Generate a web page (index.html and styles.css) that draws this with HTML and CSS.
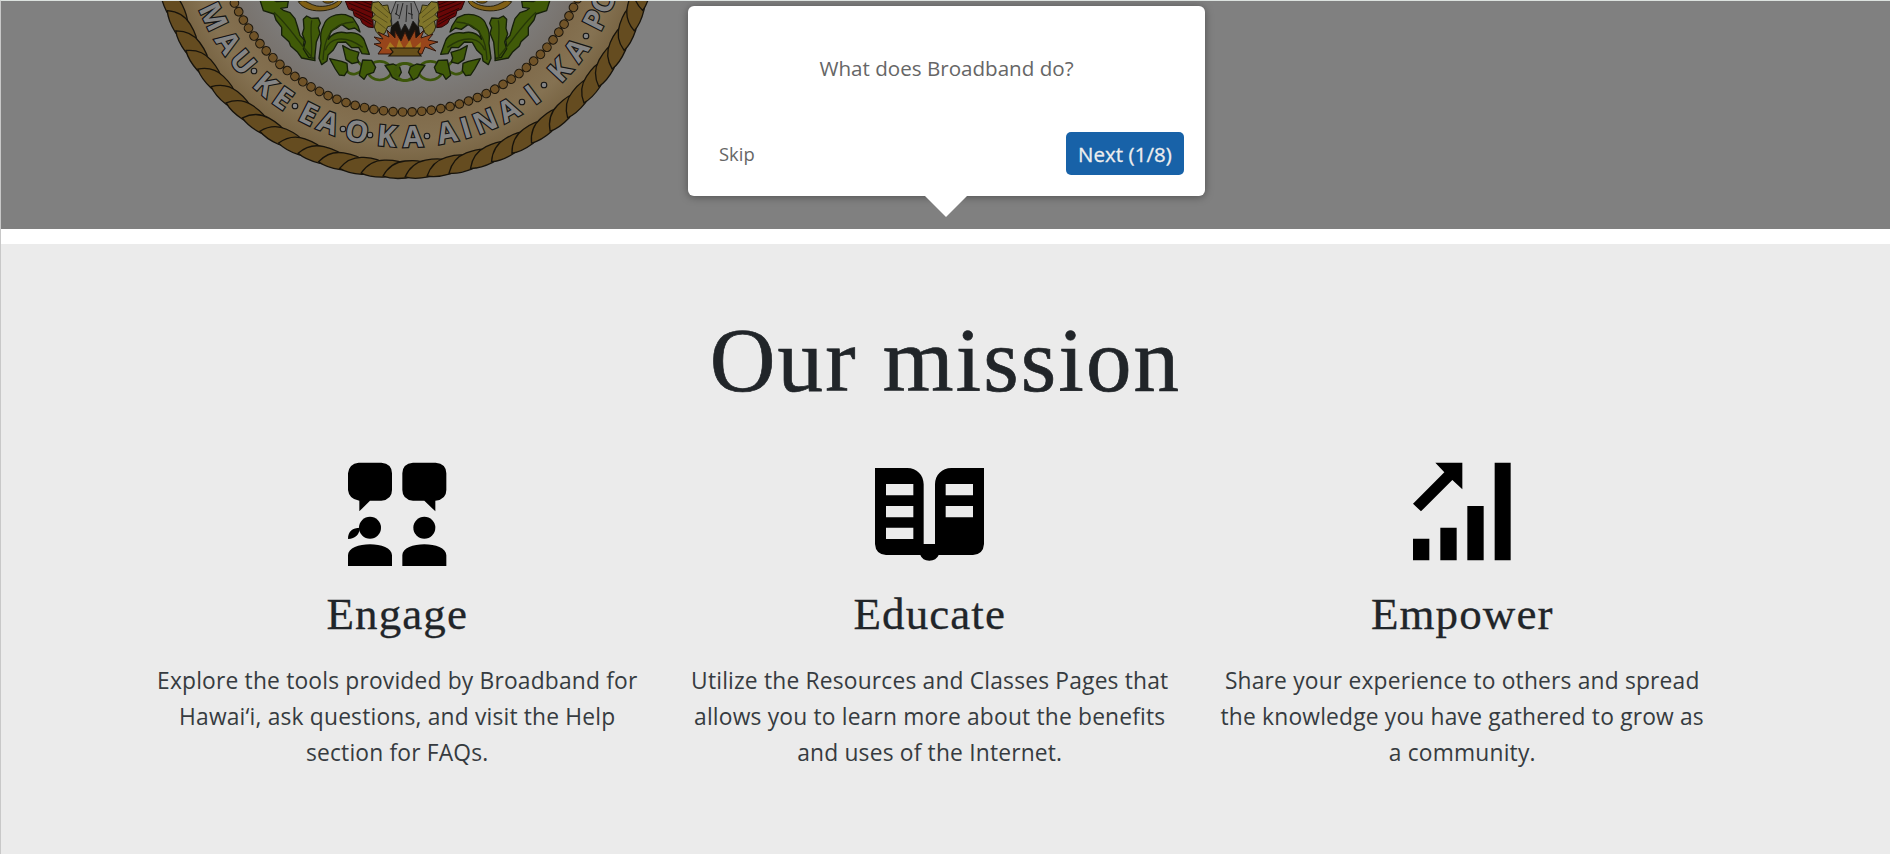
FILE: index.html
```html
<!DOCTYPE html>
<html lang="en">
<head>
<meta charset="utf-8">
<title>Broadband</title>
<link rel="stylesheet" href="styles.css">
</head>
<body>
<header class="hero">
  <svg class="seal" width="520" height="228" viewBox="145 1 520 228" aria-hidden="true">
    <defs>
      <radialGradient id="disc" gradientUnits="userSpaceOnUse" cx="405" cy="-76" r="190"><stop offset=".75" stop-color="#808080"/><stop offset="1" stop-color="#77716b"/></radialGradient>
      <radialGradient id="band" gradientUnits="userSpaceOnUse" cx="405" cy="-76" r="240"><stop offset=".78" stop-color="#806b4b"/><stop offset=".9" stop-color="#857252"/><stop offset="1" stop-color="#786443"/></radialGradient>
      <path id="s" d="M383 176C388 167 395 162 405 161C414 160 423 161 428 164C423 171 416 177 406 178C397 179 388 178 383 176Z"/>
      <g id="half">
        <path class="gold" d="M145 5C160 28 190 35 222 32C250 28 270 20 276 2L265 2C250 15 225 22 200 18C180 14 170 2 158 2Z"/>
        <path class="gold" d="M218 2C220 12 246 12 252 2Z" fill="#808080"/>
        <path class="leaf" d="M30 0L40 32L72 42L78 60L95 82L95 105L117 125L122 138L143 157L155 174L195 182L193 165L175 155L160 138L163 120L150 106L142 78L135 56L120 38L100 31L92 25L112 22L115 3L80 5L70 0Z"/>
        <path class="leaf" d="M160 58L170 48L184 55L205 54L211 70L205 83L210 100L199 126L194 175L176 172L160 147L166 126L157 102L162 85Z"/>
        <path class="leaf" d="M215 194L207 175L213 130C210 110 213 90 221 76C228 52 255 40 286 44L308 53L324 78L330 96L314 84L296 88L275 73L258 85L243 93L235 118C250 97 270 94 290 99C316 94 340 104 346 130L358 163L336 161L326 142L305 143L287 126L263 127L250 150L234 165L231 183Z"/>
        <path class="vein" d="M219 180C222 120 238 70 311 66M226 151C238 115 280 101 338 142M72 37C110 70 145 125 190 177M185 61C179 98 188 128 184 170"/>
        <g class="chain"><path d="M291 213C305 231 326 220 338 210M303 178C319 177 337 193 336 204"/><ellipse cx="389" cy="212" rx="35" ry="28"/><ellipse cx="462" cy="216" rx="33" ry="26"/></g>
        <path class="leaf" d="M239 176L275 184L291 190L293 212L283 227L268 225L256 207ZM278 137L300 149L327 157L322 174L326 186L306 191L288 179ZM338 180L365 181L377 202L371 217L351 224L342 238L328 226L332 207ZM405 196L430 192L449 201L454 217L441 240L427 232L419 216Z"/>
        <path class="wing" d="M286 3L296 28L309 32L313 48L331 57L337 70L354 81L370 83L368 52L366 3Z"/>
        <path class="rib" d="M296 9L365 38M303 25L365 53M316 39L365 65M332 54L365 74M310 4L364 24M335 3L365 15"/>
        <path class="yellow" d="M367 8L386 5L398 17L413 15L419 39L430 47L422 62L426 77L413 80L405 99L391 109L378 94L373 81L377 63L364 56L375 43L363 31Z"/>
        <path class="yrib" d="M373 20L414 53M370 41L412 68M378 63L407 86M389 12L421 43"/>
      </g>
    </defs>
    <circle cx="405" cy="-76" r="251" fill="#5f4a1e" stroke="#17130b" stroke-width="2"/>
    <circle cx="405" cy="-76" r="238" fill="url(#band)"/>
    <circle cx="405" cy="-76" r="185" fill="url(#disc)"/>
    <g class="rope">
      <use href="#s" transform="rotate(75 405 -76)"/><use href="#s" transform="rotate(70 405 -76)"/><use href="#s" transform="rotate(65 405 -76)"/><use href="#s" transform="rotate(60 405 -76)"/><use href="#s" transform="rotate(55 405 -76)"/><use href="#s" transform="rotate(50 405 -76)"/><use href="#s" transform="rotate(45 405 -76)"/><use href="#s" transform="rotate(40 405 -76)"/><use href="#s" transform="rotate(35 405 -76)"/><use href="#s" transform="rotate(30 405 -76)"/><use href="#s" transform="rotate(25 405 -76)"/><use href="#s" transform="rotate(20 405 -76)"/><use href="#s" transform="rotate(15 405 -76)"/><use href="#s" transform="rotate(10 405 -76)"/><use href="#s" transform="rotate(5 405 -76)"/><use href="#s"/><use href="#s" transform="rotate(-5 405 -76)"/><use href="#s" transform="rotate(-10 405 -76)"/><use href="#s" transform="rotate(-15 405 -76)"/><use href="#s" transform="rotate(-20 405 -76)"/><use href="#s" transform="rotate(-25 405 -76)"/><use href="#s" transform="rotate(-30 405 -76)"/><use href="#s" transform="rotate(-35 405 -76)"/><use href="#s" transform="rotate(-40 405 -76)"/><use href="#s" transform="rotate(-45 405 -76)"/><use href="#s" transform="rotate(-50 405 -76)"/><use href="#s" transform="rotate(-55 405 -76)"/><use href="#s" transform="rotate(-60 405 -76)"/><use href="#s" transform="rotate(-65 405 -76)"/><use href="#s" transform="rotate(-70 405 -76)"/><use href="#s" transform="rotate(-75 405 -76)"/>
    </g>
    <circle class="beads-edge" cx="405" cy="-76" r="188" pathLength="123"/>
    <circle class="beads" cx="405" cy="-76" r="188" pathLength="123"/>
    <g class="motto">
      <text x="405" y="147" transform="rotate(64.2 405 -76)">M</text><text x="405" y="147" transform="rotate(56.2 405 -76)">A</text><text x="405" y="147" transform="rotate(49.6 405 -76)">U</text><text x="405" y="147" transform="rotate(41 405 -76)">K</text><text x="405" y="147" transform="rotate(35 405 -76)">E</text><text x="405" y="147" transform="rotate(26.9 405 -76)">E</text><text x="405" y="147" transform="rotate(21.1 405 -76)">A</text><text x="405" y="147" transform="rotate(13 405 -76)">O</text><text x="405" y="147" transform="rotate(4.9 405 -76)">K</text><text x="405" y="147" transform="rotate(-2.1 405 -76)">A</text><text x="405" y="147" transform="rotate(-11.4 405 -76)">A</text><text x="405" y="147" transform="rotate(-16.6 405 -76)">I</text><text x="405" y="147" transform="rotate(-22.1 405 -76)">N</text><text x="405" y="147" transform="rotate(-29.1 405 -76)">A</text><text x="405" y="147" transform="rotate(-36.8 405 -76)">I</text><text x="405" y="147" transform="rotate(-46.7 405 -76)">K</text><text x="405" y="147" transform="rotate(-53.7 405 -76)">A</text><text x="405" y="147" transform="rotate(-63.2 405 -76)">P</text><text x="405" y="147" transform="rotate(-68.8 405 -76)">O</text>
    </g>
    <g class="dots"><circle cx="254" cy="71" r="2.8"/><circle cx="295" cy="106" r="2.8"/><circle cx="343" cy="129" r="2.8"/><circle cx="370" cy="135" r="2.8"/><circle cx="427" cy="136" r="2.8"/><circle cx="522" cy="102" r="2.8"/><circle cx="544" cy="85" r="2.8"/><circle cx="586" cy="36" r="2.8"/></g>
    <use href="#half" transform="translate(250 0) scale(.33333)"/>
    <use href="#half" transform="translate(560 0) scale(-.33333 .33333)"/>
    <path d="M391 27L397 20L413 20L419 27L421 40L389 40Z" fill="#17130f"/>
    <path d="M396 1L391 14L392 26L398 21L401 31L405 24L409 31L413 21L418 27L419 13L414 1Z" fill="#777" stroke="#1c1c1c" stroke-width=".8"/>
    <path d="M398 4L396 15M403 3L399 19M407 5L406 22M411 3L412 19M395 13L399 16M408 13L413 15" fill="none" stroke="#252525" stroke-width="1"/>
    <path d="M378 54L382 48L374 44L381 43L374 37L383 39L378 32L389 37L387 30L395 38L395 31L401 41L405 32L409 41L415 30L416 38L424 30L421 38L433 34L428 40L438 42L429 45L436 51L425 47L422 54Z" fill="#98451b" stroke="#30180e" stroke-width="1"/>
    <path d="M386 49L390 42L396 49L399 39L404 49L410 40L413 49L421 42L420 51Z" fill="#a77a20"/>
    <path d="M390 48L420 48L418 52L421 56L389 56L393 52Z" fill="#66501b" stroke="#21180a" stroke-width="1.2"/>
  </svg>
  <div class="tour" role="dialog">
    <p class="tour-text">What does Broadband do?</p>
    <div class="tour-actions">
      <button class="skip">Skip</button>
      <button class="next">Next (1/8)</button>
    </div>
  </div>
</header>
<main class="mission">
  <h1>Our mission</h1>
  <div class="columns">
    <section class="card">
      <svg class="icon" viewBox="6 -12 390 390"><path d="M86 38H154Q186 41 186 70V120Q186 149 154 152H120L88 184V152Q57 148 54 120V70Q57 41 86 38ZM249 38H317Q349 41 349 70V120Q349 149 316 152V184L283 152H249Q217 149 217 120V70Q217 41 249 38ZM54 348V316C54 294 87 283 120 283S186 294 186 316V348ZM217 348V316C217 294 250 283 283 283S349 294 349 316V348ZM54 267C54 243 68 233 90 233C88 253 77 266 54 267Z"/><circle cx="120" cy="233" r="33"/><circle cx="283" cy="233" r="33"/></svg>
      <h2>Engage</h2>
      <p>Explore the tools provided by Broadband for<br>Hawai‘i, ask questions, and visit the Help<br>section for FAQs.</p>
    </section>
    <section class="card">
      <svg class="icon" viewBox="15 -12 390 390"><path fill-rule="evenodd" d="M45 54H142C170 54 191 75 191 103V282H225V103C225 75 246 54 274 54H372V282Q370 313 339 315H236Q229 332 208 332T181 315H78Q47 313 45 282ZM78 102V136H160V102ZM78 168V202H160V168ZM78 233V267H160V233ZM257 102V136H339V102ZM257 168V202H339V168Z"/></svg>
      <h2>Educate</h2>
      <p>Utilize the Resources and Classes Pages that<br>allows you to learn more about the benefits<br>and uses of the Internet.</p>
    </section>
    <section class="card">
      <svg class="icon" viewBox="-10 -12 390 390"><path d="M38 266H87V331H38ZM120 233H169V331H120ZM201 168H250V331H201ZM283 38H331V331H283ZM105 38H186V118L156 90L62 184L38 161L132 67Z"/></svg>
      <h2>Empower</h2>
      <p>Share your experience to others and spread<br>the knowledge you have gathered to grow as<br>a community.</p>
    </section>
  </div>
</main>
</body>
</html>
```
FILE: styles.css
```css
* { box-sizing: border-box; }
body {
  margin: 0;
  height: 854px;
  overflow: hidden;
  background: #fff;
  border-left: 1px solid #c8c8c8;
  border-top: 1px solid #dce2df;
  font-family: "Open Sans", "Noto Sans", sans-serif;
  color: #212529;
}
.hero {
  position: relative;
  height: 228px;
  background: #808080;
}
.seal { display: block; margin-left: 144px; }
.rope { fill: #654c20; stroke: #17130b; stroke-width: 1.3; }
.beads-edge, .beads { fill: none; stroke-linecap: round; stroke-dasharray: .001 .999; }
.beads-edge { stroke: #1e180e; stroke-width: 9.6; }
.beads { stroke: #705328; stroke-width: 7.4; }
.motto {
  font: bold 29px "Open Sans", sans-serif;
  text-anchor: middle;
  fill: #858585;
  stroke: #151515;
  stroke-width: 2.4;
  paint-order: stroke;
}
.dots { fill: #858585; stroke: #151515; stroke-width: 1.1; }
.leaf { fill: #405a08; stroke: #16200a; stroke-width: 4; stroke-linejoin: round; }
.vein { fill: none; stroke: #263708; stroke-width: 4; }
.chain { fill: none; stroke: #3d560b; stroke-width: 8; }
.gold { fill: #805f15; stroke: #251f0d; stroke-width: 3; }
.wing { fill: #680707; stroke: #250606; stroke-width: 3; }
.rib { fill: none; stroke: #2c0505; stroke-width: 3; }
.yellow { fill: #80752a; stroke: #292710; stroke-width: 3; }
.yrib { fill: none; stroke: #464015; stroke-width: 2; }

/* Guided tour popover, floating over the hero */
.tour {
  position: absolute;
  left: 686.5px;
  top: 5px;
  width: 517px;
  height: 190px;
  padding: 46px 20.5px 0 31.5px;
  border-radius: 6px;
  background: #fff;
  box-shadow: 0 1px 8px rgba(0, 0, 0, .38);
  color: #666;
}
.tour::after {
  content: "";
  position: absolute;
  left: 236.5px;
  top: 189px;
  border: 22.5px solid transparent;
  border-top-color: #fff;
  border-bottom: 0;
}
.tour-text {
  margin: 0 10px 0 0;
  text-align: center;
  font-size: 20.6px;
  line-height: 32px;
}
.tour-actions {
  display: flex;
  justify-content: space-between;
  align-items: center;
  margin-top: 48px;
}
button { font-family: inherit; border: 0; padding: 0; background: none; color: #666; }
.skip { font-size: 18.4px; }
.next {
  width: 118px;
  height: 43px;
  border-radius: 5px;
  background: #1862a8;
  color: #eee;
  font-size: 20.4px;
  font-weight: 500;
  -webkit-text-stroke: .3px #eee;
  letter-spacing: .1px;
  white-space: nowrap;
}

.mission {
  height: 610px;
  margin-top: 15px;
  padding-top: 64px;
  background: #ebebeb;
}
h1, h2 { margin: 0; font-family: "Liberation Serif", serif; font-weight: 400; text-align: center; }
h1 { font-size: 91px; line-height: 106px; letter-spacing: 2.2px; -webkit-text-stroke: .7px #212529; }
.columns {
  display: grid;
  grid-template-columns: repeat(3, 532.5px);
  margin: 32px 0 0 130px;
}
.card { display: flex; flex-direction: column; align-items: center; }
.icon { width: 130px; height: 130px; }
h2 { margin-top: 11px; font-size: 45px; line-height: 54px; letter-spacing: 1.1px; -webkit-text-stroke: .3px #212529; }
.card p {
  margin: 22px 0 0;
  color: #363b40;
  font-size: 22.8px;
  line-height: 36.2px;
  letter-spacing: .18px;
  text-align: center;
  white-space: nowrap;
}
```
